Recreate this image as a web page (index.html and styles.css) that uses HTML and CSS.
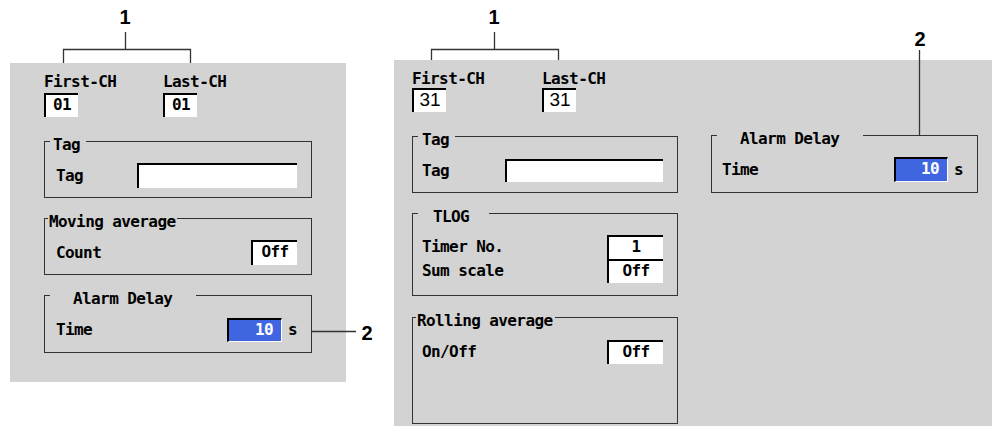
FILE: index.html
```html
<!DOCTYPE html>
<html>
	<head>
		<meta charset="utf-8" />
		<title>Channel settings</title>
		<link rel="stylesheet" href="styles.css">
	</head>
	<body>
		<div class="page">
			<!-- left screen -->
			<div class="screen left">
				<div class="ch-row">
					<div class="ch">
						<span>First-CH</span>
						<span class="box">01</span>
					</div>
					<div class="ch">
						<span>Last-CH</span>
						<span class="box">01</span>
					</div>
				</div>
				<div class="group">
					<div class="legend">Tag</div>
					<div class="row">
						<span>Tag</span>
						<span class="box tag-input"></span>
					</div>
				</div>
				<div class="group">
					<div class="legend flush">Moving average</div>
					<div class="row">
						<span>Count</span>
						<span class="box small">Off</span>
					</div>
				</div>
				<div class="group alarm">
					<div class="legend wide">Alarm Delay</div>
					<div class="row">
						<span>Time</span>
						<span class="value"><span class="box sel">10</span><span class="unit">s</span></span>
					</div>
				</div>
			</div>

			<!-- right screen -->
			<div class="screen right">
				<div class="ch-row">
					<div class="ch">
						<span>First-CH</span>
						<span class="box num-box">31</span>
					</div>
					<div class="ch">
						<span>Last-CH</span>
						<span class="box num-box">31</span>
					</div>
				</div>
				<div class="stack">
					<div class="group">
						<div class="legend">Tag</div>
						<div class="row">
							<span>Tag</span>
							<span class="box tag-input"></span>
						</div>
					</div>
					<div class="group tlog">
						<div class="legend tlog-title">TLOG</div>
						<div class="row tight">
							<span>Timer No.</span>
							<span class="box mid">1</span>
						</div>
						<div class="row tight next">
							<span>Sum scale</span>
							<span class="box mid">Off</span>
						</div>
					</div>
					<div class="group rolling">
						<div class="legend flush">Rolling average</div>
						<div class="row">
							<span>On/Off</span>
							<span class="box mid">Off</span>
						</div>
					</div>
				</div>
				<div class="group alarm side">
					<div class="legend wide">Alarm Delay</div>
					<div class="row">
						<span>Time</span>
						<span class="value"><span class="box sel">10</span><span class="unit">s</span></span>
					</div>
				</div>
			</div>

			<!-- callouts -->
			<svg class="leaders" width="992" height="426">
				<path d="M125.5 32V49.5M63.5 63V49.5H190.5V63" />
				<path d="M494.5 32V49.5M431.5 60V49.5H558.5V60" />
				<path d="M312 331.5H356" />
				<path d="M919.5 50V135" />
			</svg>
			<span class="callout c1">1</span>
			<span class="callout c2">1</span>
			<span class="callout c3">2</span>
			<span class="callout c4">2</span>
		</div>
	</body>
</html>
```

FILE: styles.css
```css
body{
	margin:0;
	background:#fff;
	color:#000;
	font-family:"DejaVu Sans Mono", monospace;
	font-size:16px;
	font-weight:bold;
	letter-spacing:-0.6px;
}
.page{
	position:relative;
	display:flex;
	align-items:flex-start;
	width:992px;
	height:426px;
}
.screen{
	box-sizing:border-box;
	background:#d3d3d3;
	line-height:18px;
}
.left{
	width:336px;
	height:319px;
	margin:63px 0 0 10px;
	padding:10px 0 0 34px;
}
.right{
	flex:1;
	height:366px;
	margin:60px 0 0 48px;
	padding:10px 0 2px 18px;
	display:grid;
	grid-template-columns:266px 267px;
	grid-template-rows:auto 1fr;
	column-gap:33px;
}

/* channel range */
.ch-row{
	display:flex;
}
.ch{
	display:flex;
	flex-direction:column;
	align-items:flex-start;
}
.left .ch{width:119px;}
.right .ch{width:130px;}
.ch .box{
	width:34px;
	margin-top:2px;
}
.right .ch .box{margin-top:0;}

/* value fields */
.box{
	box-sizing:border-box;
	display:block;
	height:24px;
	border-top:2px solid #000;
	border-left:2px solid #000;
	background:#fff;
	text-align:center;
	line-height:20px;
}
.num-box{
	font-family:"Liberation Sans", Arial, sans-serif;
	font-size:19px;
	font-weight:normal;
	letter-spacing:0;
}
.tag-input{
	width:160px;
	height:25px;
}
.right .tag-input{
	width:158px;
	height:23px;
}
.small{width:46px;height:25px;}
.mid{width:56px;}
.sel{
	width:55px;
	background:#3f66e0;
	border-right:1px solid #fff;
	border-bottom:1px solid #fff;
	color:#fff;
	text-align:right;
	padding-right:8px;
}
.side .sel{width:54px;height:25px;}
.value{
	display:flex;
	align-items:center;
}
.unit{
	margin-left:6px;
}

/* frames */
.group{
	box-sizing:border-box;
	width:268px;
	margin-top:20px;
	padding-bottom:9px;
	border:1px solid #333;
}
.left .ch-row + .group{margin-top:24px;}
.right .group{width:266px;}
.legend{
	width:fit-content;
	margin:-6px 0 0 5px;
	padding:0 6px 0 3px;
	background:#d3d3d3;
}
.right .legend{padding-left:4px;}
.legend.flush{
	margin-left:3px;
	padding:0 2px 0 1px;
}
.legend.wide{
	padding:0 24px 0 23px;
}
.legend.tlog-title{
	padding:0 20px 0 15px;
}
.row{
	display:flex;
	align-items:center;
	justify-content:space-between;
	height:25px;
	margin-top:9px;
	padding:0 14px 0 11px;
}
.right .row{padding-left:9px;}
.right .side .row{padding-left:10px;}
.row.tight{height:24px;}
.row.next{margin-top:0;}
.alarm{padding-bottom:10px;}
.tlog{padding-bottom:12px;}

.stack{
	grid-column:1;
	display:flex;
	flex-direction:column;
	margin-top:24px;
}
.stack .group:first-child{margin-top:0;}
.rolling{
	flex:1;
	margin-top:21px;
}
.right .side{
	grid-column:2;
	grid-row:2;
	align-self:start;
	width:267px;
	margin-top:23px;
}

/* callouts */
.leaders{
	position:absolute;
	top:0;
	left:0;
	pointer-events:none;
}
.leaders path{
	fill:none;
	stroke:#333;
	stroke-width:1.3;
}
.callout{
	position:absolute;
	width:20px;
	text-align:center;
	font:bold 20px/20px "Liberation Sans", Arial, sans-serif;
	letter-spacing:0;
}
.c1{left:115px;top:7px;}
.c2{left:484px;top:7px;}
.c3{left:357px;top:323px;}
.c4{left:910px;top:29px;}
```
